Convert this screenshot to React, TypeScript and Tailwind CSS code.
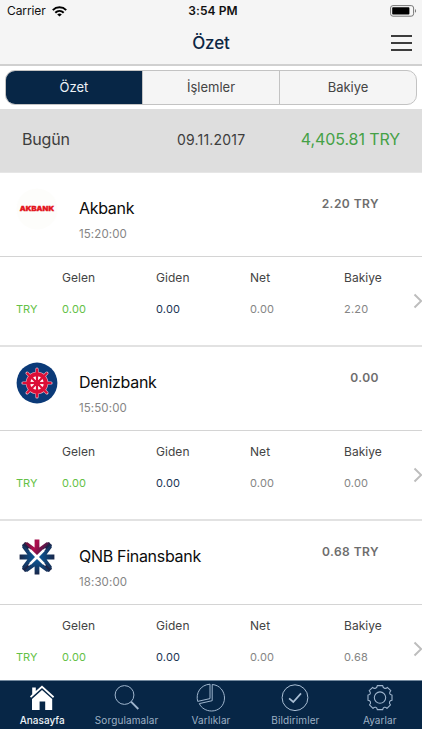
import React from "react";

const AkbankLogo = () => (
  <svg width="42" height="42" viewBox="0 0 42 42">
    <circle cx="21" cy="21" r="20.5" fill="#fdfdfb" />
    <text
      x="3.8"
      y="23.2"
      fontSize="5.6"
      fontWeight="900"
      textLength="34.4"
      lengthAdjust="spacingAndGlyphs"
      fill="#e3141c"
      stroke="#e3141c"
      strokeWidth="0.3"
      fontFamily="Inter, 'Liberation Sans', sans-serif"
    >
      AKBANK
    </text>
  </svg>
);

const spokes = [0, 45, 90, 135, 180, 225, 270, 315];

const DenizLogo = () => (
  <svg width="42" height="42" viewBox="-21 -21 42 42">
    <circle r="20.4" fill="#0b3a78" />
    <g stroke="#e8b8c8" strokeWidth="3.2" strokeLinecap="round">
      {spokes.map((a) => (
        <line key={a} x1="0" y1="-9" x2="0" y2="-14" transform={`rotate(${a})`} />
      ))}
    </g>
    <circle r="11.3" fill="#e8b8c8" />
    <circle r="10.7" fill="#dc0f38" />
    <circle r="6.8" fill="#fff" />
    <g stroke="#dc0f38" strokeWidth="2.2">
      {spokes.map((a) => (
        <line key={a} x1="0" y1="0" x2="0" y2="-14.5" transform={`rotate(${a})`} />
      ))}
    </g>
    <circle r="3.2" fill="#dc0f38" />
  </svg>
);

const arrow = "M0 -2L12.8 -14.2L9.6 -14.8L2.4 -9.6V-17.4H-2.4V-9.6L-9.6 -14.8L-12.8 -14.2Z";

const QnbLogo = () => (
  <svg width="42" height="42" viewBox="-21 -21 42 42">
    <defs>
      <linearGradient id="qnbRed" x1="0" x2="1" y1="0" y2="0.3">
        <stop offset="0" stopColor="#431337" />
        <stop offset="0.5" stopColor="#b10d4c" />
        <stop offset="1" stopColor="#391b46" />
      </linearGradient>
      <linearGradient id="qnbBlue" x1="0" x2="0" y1="0" y2="1">
        <stop offset="0" stopColor="#192749" />
        <stop offset="1" stopColor="#0b5797" />
      </linearGradient>
    </defs>
    <g stroke="#1d2448" strokeWidth="4.6">
      <path d="M-13.4 -13.4L-7 -7M13.4 -13.4L7 -7M13.4 13.4L7 7M-13.4 13.4L-7 7" />
    </g>
    <path d={arrow} fill="url(#qnbRed)" />
    <path d={arrow} fill="url(#qnbBlue)" transform="rotate(90)" />
    <path d={arrow} fill="url(#qnbBlue)" transform="rotate(180)" />
    <path d={arrow} fill="url(#qnbBlue)" transform="rotate(270)" />
    <path d="M-8.5 -8.5L8.5 8.5M8.5 -8.5L-8.5 8.5" stroke="#fff" strokeWidth="1.3" />
  </svg>
);

const HomeIcon = () => (
  <svg width="30" height="30" viewBox="0 0 30 30" fill="#fff">
    <path d="M3 13.4L5.2 11.3V4.5H8.8V8L15 2.4L27.2 13.6L26 15L15 5L4.1 14.8Z" />
    <path d="M5 16L15 6.9L25.2 16V27H18.2V18.4H12.6V27H5Z" />
  </svg>
);

const SearchIcon = () => (
  <svg width="30" height="30" viewBox="0 0 30 30" fill="none" stroke="#9fb5cd">
    <circle cx="12.5" cy="12" r="9.4" strokeWidth="1" />
    <path d="M19 18.7L26.3 26" strokeWidth="1.9" />
  </svg>
);

const PieIcon = () => (
  <svg width="30" height="30" viewBox="0 0 30 30" fill="none" stroke="#9fb5cd" strokeWidth="1">
    <path d="M14 1.2V15.6L1.7 18.4C-0.6 10.2 4.6 1.7 14 1.2Z" />
    <path d="M16.2 1.5C24 2 28.5 8.5 28.5 15C28.5 22.5 22.8 28 15.7 28C10 28 5.3 25 3.3 20.6L16.2 17.7Z" />
  </svg>
);

const CheckIcon = () => (
  <svg width="30" height="30" viewBox="0 0 30 30" fill="none" stroke="#a9bed4">
    <circle cx="15" cy="14.7" r="12.9" strokeWidth="1" />
    <path d="M9.1 15.3L13.3 19L21 10.4" strokeWidth="1.7" />
  </svg>
);

const GearIcon = () => (
  <svg width="30" height="30" viewBox="0 0 30 30" fill="none" stroke="#9fb5cd" strokeWidth="1.1" strokeLinejoin="round">
    <circle cx="15" cy="14.6" r="5.7" />
    <path
      transform="translate(15 14.6)"
      d="M-2.7 -12H2.7C2.9 -9.4 5.5 -8.2 7.3 -10.2L10.8 -7C8.9 -4.8 9.4 -2.8 12 -2.6V2.6C9.4 2.8 8.5 5.3 10.5 7.2L7 10.7C5.2 8.7 2.9 9.6 2.7 12H-2.7C-2.9 9.6 -5.2 8.7 -7 10.7L-10.5 7.2C-8.5 5.3 -9.4 2.8 -12 2.6V-2.6C-9.4 -2.8 -8.9 -4.8 -10.8 -7L-7.3 -10.2C-5.5 -8.2 -2.9 -9.4 -2.7 -12Z"
    />
  </svg>
);

const banks = [
  { name: "Akbank", time: "15:20:00", total: "2.20 TRY", balance: "2.20", logo: <AkbankLogo /> },
  { name: "Denizbank", time: "15:50:00", total: "0.00", balance: "0.00", logo: <DenizLogo /> },
  { name: "QNB Finansbank", time: "18:30:00", total: "0.68 TRY", balance: "0.68", logo: <QnbLogo /> },
];

const navItems = [
  { label: "Anasayfa", icon: <HomeIcon />, active: true },
  { label: "Sorgulamalar", icon: <SearchIcon />, active: false },
  { label: "Varlıklar", icon: <PieIcon />, active: false },
  { label: "Bildirimler", icon: <CheckIcon />, active: false },
  { label: "Ayarlar", icon: <GearIcon />, active: false },
];

function Column({ label, value, color }: { label: string; value: string; color: string }) {
  return (
    <div className="w-[94px] shrink-0">
      <div className="h-5 text-[12px] leading-5 tracking-[0.05px] text-[#444]">{label}</div>
      <div className={`mt-[11px] h-5 text-[11px] leading-5 tracking-[0.2px] ${color}`}>{value}</div>
    </div>
  );
}

function BankSection({ bank }: { bank: (typeof banks)[number] }) {
  return (
    <section className="h-[174px] shrink-0 border-b-2 border-[#e2e2e2]">
      <div className="flex h-[84px] border-b border-[#d4d4d4] pl-4">
        <div className="mt-[15px] h-[42px] w-[42px]">{bank.logo}</div>
        <div className="ml-[21px] flex-1 pt-[23px]">
          <div className="h-6 text-[16px] leading-6 tracking-[-0.3px] text-[#0c0c0c]">{bank.name}</div>
          <div className="mt-[5px] h-[18px] text-[11.5px] leading-[18px] tracking-[0.1px] text-[#858585]">{bank.time}</div>
        </div>
        <div className="mr-[43px] h-5 pt-[21px] text-[12px] font-semibold leading-5 tracking-[0.45px] text-[#6d6d6d]">
          {bank.total}
        </div>
      </div>
      <div className="flex overflow-hidden pl-4 pt-[11px]">
        <div className="mt-[31px] h-5 w-[46px] shrink-0 text-[11px] leading-5 text-[#64c146]">TRY</div>
        <Column label="Gelen" value="0.00" color="text-[#64c146]" />
        <Column label="Giden" value="0.00" color="text-[#1b3454]" />
        <Column label="Net" value="0.00" color="text-[#858585]" />
        <div className="flex w-[78px]">
          <div className="w-[69px] overflow-hidden">
            <Column label="Bakiye" value={bank.balance} color="text-[#858585]" />
          </div>
          <svg className="mt-[25px] shrink-0" width="9" height="16" viewBox="0 0 9 16" fill="none" stroke="#bdbdbd" strokeWidth="2">
            <path d="M1.5 1.5L8.2 8L1.5 14.5" />
          </svg>
        </div>
      </div>
    </section>
  );
}

export default function App() {
  return (
    <div className="flex h-[750px] w-[422px] flex-col overflow-hidden bg-white font-[Inter,'Liberation_Sans',sans-serif]">
      <header className="h-[66px] shrink-0 border-b-2 border-[#d0d0d0] bg-[#f5f5f5]">
        <div className="grid h-[22px] grid-cols-3 items-center text-[12px] leading-[22px] text-[#111]">
          <div className="flex items-center pl-[7px]">
            <span className="tracking-[-0.1px]">Carrier</span>
            <svg className="ml-[6px]" width="15" height="11" viewBox="0 0 15 11" fill="none" stroke="#000" strokeWidth="2">
              <path d="M0.8 4.1C4.5 0.4 10.5 0.4 14.2 4.1" />
              <path d="M3.3 6.7C5.7 4.4 9.3 4.4 11.7 6.7" />
              <path d="M7.5 10.6L5.2 8.4C6.5 7.2 8.5 7.2 9.8 8.4Z" fill="#000" stroke="none" />
            </svg>
          </div>
          <div className="pl-1 text-center font-semibold tracking-[0.1px]">3:54 PM</div>
          <div className="flex justify-end pr-[5px]">
            <svg width="27" height="12" viewBox="0 0 27 12">
              <rect x="0.6" y="0.6" width="23" height="10.6" rx="2.4" fill="none" stroke="#777" />
              <rect x="2.2" y="2.2" width="17.2" height="7.4" rx="0.8" fill="#000" />
              <path d="M25 4C26.4 4.5 26.4 7.3 25 7.8Z" fill="#777" />
            </svg>
          </div>
        </div>
        <div className="grid h-[42px] grid-cols-[42px_1fr_42px] items-center">
          <div />
          <h1 className="text-center text-[17px] font-medium leading-[42px] tracking-[-0.1px] text-[#0c2644]">Özet</h1>
          <div className="flex flex-col gap-[5px] pr-[10px] pl-[11px]">
            <span className="h-[2px] bg-[#3c3c3c]" />
            <span className="h-[2px] bg-[#3c3c3c]" />
            <span className="h-[2px] bg-[#3c3c3c]" />
          </div>
        </div>
      </header>

      <div className="h-[43px] shrink-0 pl-[5px] pr-[5px] pt-1">
        <div className="grid h-[35px] grid-cols-[136px_138px_1fr] overflow-hidden rounded-[10px] border border-[#c3c3c3] bg-[#f5f5f5] text-center text-[13px] leading-[33px] text-[#444]">
          <div className="bg-[#072646] text-[#eef2f6]">Özet</div>
          <div className="border-x border-[#c3c3c3]">İşlemler</div>
          <div>Bakiye</div>
        </div>
      </div>

      <div className="flex h-[64px] shrink-0 items-center border-b border-[#e6e6e6] bg-[#dedede] pb-1 pl-[22px] pr-[22px] text-[#3d3d3d]">
        <div className="w-[155px] text-[16px] tracking-[-0.2px]">Bugün</div>
        <div className="pt-[2px] text-[14px] tracking-[0.2px]">09.11.2017</div>
        <div className="ml-auto text-[16px] tracking-[-0.1px] text-[#45a146]">4,405.81 TRY</div>
      </div>

      <main className="h-[507px] shrink-0 overflow-hidden">
        {banks.map((bank) => (
          <BankSection key={bank.name} bank={bank} />
        ))}
      </main>

      <nav className="grid h-[49px] shrink-0 grid-cols-5 border-t border-[#748a9f] bg-[#072646]">
        {navItems.map((item) => (
          <div key={item.label} className="flex flex-col items-center pt-[2px]">
            {item.icon}
            <span className={`mt-px h-3 text-[10px] leading-3 ${item.active ? "font-medium text-[#edf2f7]" : "text-[#9db0c4] tracking-[0.1px]"}`}>
              {item.label}
            </span>
          </div>
        ))}
      </nav>
    </div>
  );
}
